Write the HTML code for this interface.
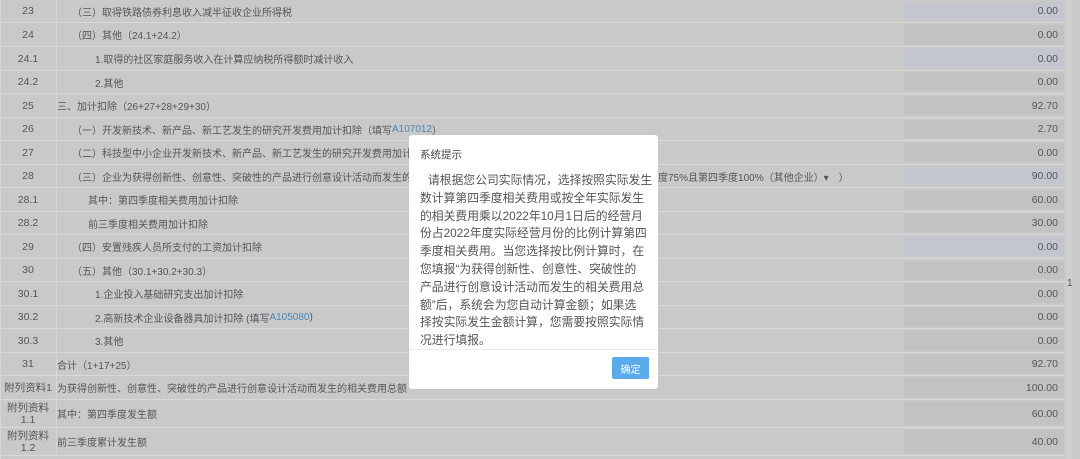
<!DOCTYPE html>
<html><head><meta charset="utf-8"><style>
*{margin:0;padding:0;box-sizing:border-box}
body{width:1080px;height:459px;overflow:hidden;background:#c9c9c9;font-family:"Liberation Sans","Noto Sans CJK SC",sans-serif;font-size:10px;color:#555;position:relative}
.r{position:absolute;left:0;width:1065px;border-bottom:1px solid #d9d9d9}
.n{position:absolute;left:0;width:57px;height:100%;border-right:1px solid #d6d6d6;text-align:center;display:flex;align-items:center;justify-content:center;font-size:10.5px;line-height:12px}
.t{position:absolute;left:60px;height:100%;display:flex;align-items:center;white-space:nowrap}
.v{position:absolute;left:904px;width:160px;top:2px;bottom:2px;background:#c2c2c2;text-align:right;padding-right:6px;display:flex;align-items:center;justify-content:flex-end;font-size:10.5px}
.v.b{background:#c3c6cf}
.a{color:#4f86b8}
.m{position:absolute;left:409px;top:135px;width:249px;height:254px;background:#fff;border-radius:3px}
.mt{position:absolute;left:11px;top:37px;font-size:11.8px;line-height:17.8px;color:#555;white-space:nowrap}
</style></head><body>
<div style="position:absolute;left:0;top:0;width:1px;height:459px;background:#d6d6d6"></div>
<div style="position:absolute;left:1066px;top:0;width:6px;height:459px;background:#cfcfcf"></div>
<div style="position:absolute;left:1067px;top:278px;font-size:10px;color:#555">1</div>

<div class="r" style="top:0;height:23px"><div class="n">23</div><div class="t" style="left:72px">（三）取得铁路债券利息收入减半征收企业所得税</div><div class="v b">0.00</div></div>
<div class="r" style="top:23px;height:24px"><div class="n">24</div><div class="t" style="left:72px">（四）其他（24.1+24.2）</div><div class="v">0.00</div></div>
<div class="r" style="top:47px;height:24px"><div class="n">24.1</div><div class="t" style="left:95px">1.取得的社区家庭服务收入在计算应纳税所得额时减计收入</div><div class="v b">0.00</div></div>
<div class="r" style="top:71px;height:23px"><div class="n">24.2</div><div class="t" style="left:95px">2.其他</div><div class="v">0.00</div></div>
<div class="r" style="top:94px;height:24px"><div class="n">25</div><div class="t" style="left:57px">三、加计扣除（26+27+28+29+30）</div><div class="v">92.70</div></div>
<div class="r" style="top:118px;height:23px"><div class="n">26</div><div class="t" style="left:72px">（一）开发新技术、新产品、新工艺发生的研究开发费用加计扣除（填写<span class="a">A107012</span>）</div><div class="v">2.70</div></div>
<div class="r" style="top:141px;height:24px"><div class="n">27</div><div class="t" style="left:72px">（二）科技型中小企业开发新技术、新产品、新工艺发生的研究开发费用加计</div><div class="v">0.00</div></div>
<div class="r" style="top:165px;height:23px"><div class="n">28</div><div class="t" style="left:72px">（三）企业为获得创新性、创意性、突破性的产品进行创意设计活动而发生的</div><div class="t" style="left:658px">度75%且第四季度100%（其他企业）▾　）</div><div class="v b">90.00</div></div>
<div class="r" style="top:188px;height:24px"><div class="n">28.1</div><div class="t" style="left:88px">其中：第四季度相关费用加计扣除</div><div class="v">60.00</div></div>
<div class="r" style="top:212px;height:23px"><div class="n">28.2</div><div class="t" style="left:88px">前三季度相关费用加计扣除</div><div class="v">30.00</div></div>
<div class="r" style="top:235px;height:24px"><div class="n">29</div><div class="t" style="left:72px">（四）安置残疾人员所支付的工资加计扣除</div><div class="v b">0.00</div></div>
<div class="r" style="top:259px;height:23px"><div class="n">30</div><div class="t" style="left:72px">（五）其他（30.1+30.2+30.3）</div><div class="v">0.00</div></div>
<div class="r" style="top:282px;height:24px"><div class="n">30.1</div><div class="t" style="left:95px">1.企业投入基础研究支出加计扣除</div><div class="v">0.00</div></div>
<div class="r" style="top:306px;height:23px"><div class="n">30.2</div><div class="t" style="left:95px">2.高新技术企业设备器具加计扣除 (填写<span class="a">A105080</span>)</div><div class="v">0.00</div></div>
<div class="r" style="top:329px;height:24px"><div class="n">30.3</div><div class="t" style="left:95px">3.其他</div><div class="v">0.00</div></div>
<div class="r" style="top:353px;height:23px"><div class="n">31</div><div class="t" style="left:57px">合计（1+17+25）</div><div class="v">92.70</div></div>
<div class="r" style="top:376px;height:24px"><div class="n">附列资料1</div><div class="t" style="left:57px">为获得创新性、创意性、突破性的产品进行创意设计活动而发生的相关费用总额</div><div class="v">100.00</div></div>
<div class="r" style="top:400px;height:28px"><div class="n">附列资料<br>1.1</div><div class="t" style="left:57px">其中：第四季度发生额</div><div class="v">60.00</div></div>
<div class="r" style="top:428px;height:28px"><div class="n">附列资料<br>1.2</div><div class="t" style="left:57px">前三季度累计发生额</div><div class="v">40.00</div></div>

<div class="m">
<div style="position:absolute;left:11px;top:12px;font-size:10.5px;color:#444">系统提示</div>
<div class="mt"><span style="padding-left:8px"></span>请根据您公司实际情况，选择按照实际发生<br>数计算第四季度相关费用或按全年实际发生<br>的相关费用乘以2022年10月1日后的经营月<br>份占2022年度实际经营月份的比例计算第四<br>季度相关费用。当您选择按比例计算时，在<br>您填报“为获得创新性、创意性、突破性的<br>产品进行创意设计活动而发生的相关费用总<br>额”后，系统会为您自动计算金额；如果选<br>择按实际发生金额计算，您需要按照实际情<br>况进行填报。</div>
<div style="position:absolute;left:0;top:214px;width:100%;height:1px;background:#ececec"></div>
<div style="position:absolute;left:203px;top:222px;width:37px;height:22px;background:#5aabeb;border-radius:2px;color:#fff;font-size:10px;display:flex;align-items:center;justify-content:center">确定</div>
</div>
</body></html>
